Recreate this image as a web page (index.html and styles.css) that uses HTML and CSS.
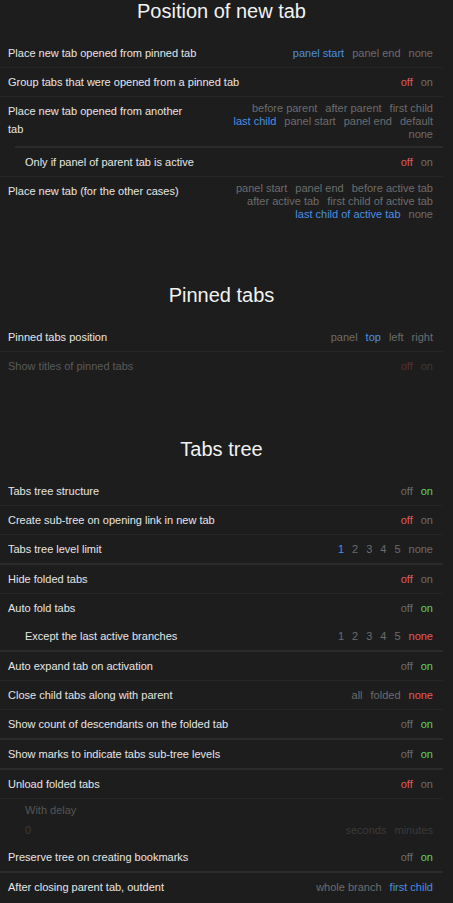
FILE: index.html
```html
<!DOCTYPE html>
<html lang="en">
<head>
<meta charset="utf-8">
<title>Settings</title>
<link rel="stylesheet" href="styles.css">
</head>
<body>
<main class="page">
  <section class="section">
    <h2 class="title">Position of new tab</h2>
    <div class="row">
      <div class="label">Place new tab opened from pinned tab</div>
      <div class="opts"><span class="blue">panel start</span><span>panel end</span><span>none</span></div>
    </div>
    <div class="sep"></div>
    <div class="row">
      <div class="label">Group tabs that were opened from a pinned tab</div>
      <div class="opts"><span class="red">off</span><span>on</span></div>
    </div>
    <div class="sep"></div>
    <div class="row">
      <div class="label">Place new tab opened from another tab</div>
      <div class="opts multi"><span>before parent</span><span>after parent</span><span>first child</span><span class="blue">last child</span><span>panel start</span><span>panel end</span><span>default</span><span>none</span></div>
    </div>
    <div class="sep thick inset"></div>
    <div class="row sub">
      <div class="label">Only if panel of parent tab is active</div>
      <div class="opts"><span class="red">off</span><span>on</span></div>
    </div>
    <div class="sep"></div>
    <div class="row">
      <div class="label">Place new tab (for the other cases)</div>
      <div class="opts multi"><span>panel start</span><span>panel end</span><span>before active tab</span><span>after active tab</span><span>first child of active tab</span><span class="blue">last child of active tab</span><span>none</span></div>
    </div>
  </section>

  <section class="section">
    <h2 class="title">Pinned tabs</h2>
    <div class="row">
      <div class="label">Pinned tabs position</div>
      <div class="opts"><span>panel</span><span class="blue">top</span><span>left</span><span>right</span></div>
    </div>
    <div class="sep"></div>
    <div class="row disabled">
      <div class="label">Show titles of pinned tabs</div>
      <div class="opts"><span class="red">off</span><span>on</span></div>
    </div>
  </section>

  <section class="section">
    <h2 class="title">Tabs tree</h2>
    <div class="row">
      <div class="label">Tabs tree structure</div>
      <div class="opts"><span>off</span><span class="green">on</span></div>
    </div>
    <div class="sep"></div>
    <div class="row">
      <div class="label">Create sub-tree on opening link in new tab</div>
      <div class="opts"><span class="red">off</span><span>on</span></div>
    </div>
    <div class="sep"></div>
    <div class="row">
      <div class="label">Tabs tree level limit</div>
      <div class="opts"><span class="blue">1</span><span>2</span><span>3</span><span>4</span><span>5</span><span>none</span></div>
    </div>
    <div class="sep thick"></div>
    <div class="row">
      <div class="label">Hide folded tabs</div>
      <div class="opts"><span class="red">off</span><span>on</span></div>
    </div>
    <div class="sep"></div>
    <div class="row">
      <div class="label">Auto fold tabs</div>
      <div class="opts"><span>off</span><span class="green">on</span></div>
    </div>
    <div class="row sub">
      <div class="label">Except the last active branches</div>
      <div class="opts"><span>1</span><span>2</span><span>3</span><span>4</span><span>5</span><span class="red">none</span></div>
    </div>
    <div class="sep thick"></div>
    <div class="row">
      <div class="label">Auto expand tab on activation</div>
      <div class="opts"><span>off</span><span class="green">on</span></div>
    </div>
    <div class="sep"></div>
    <div class="row">
      <div class="label">Close child tabs along with parent</div>
      <div class="opts"><span>all</span><span>folded</span><span class="red">none</span></div>
    </div>
    <div class="sep"></div>
    <div class="row">
      <div class="label">Show count of descendants on the folded tab</div>
      <div class="opts"><span>off</span><span class="green">on</span></div>
    </div>
    <div class="sep thick"></div>
    <div class="row">
      <div class="label">Show marks to indicate tabs sub-tree levels</div>
      <div class="opts"><span>off</span><span class="green">on</span></div>
    </div>
    <div class="sep thick"></div>
    <div class="row">
      <div class="label">Unload folded tabs</div>
      <div class="opts"><span class="red">off</span><span>on</span></div>
    </div>
    <div class="sep"></div>
    <div class="delay">
      <div class="delay-label">With delay</div>
      <div class="delay-input">
        <span class="num">0</span>
        <div class="opts"><span>seconds</span><span>minutes</span></div>
      </div>
    </div>
    <div class="row">
      <div class="label">Preserve tree on creating bookmarks</div>
      <div class="opts"><span>off</span><span class="green">on</span></div>
    </div>
    <div class="sep thick"></div>
    <div class="row">
      <div class="label">After closing parent tab, outdent</div>
      <div class="opts"><span>whole branch</span><span class="blue">first child</span></div>
    </div>
  </section>
</main>
</body>
</html>
```

FILE: styles.css
```css
* { box-sizing: border-box; }

html, body {
  margin: 0;
  padding: 0;
  background: #1d1d1d;
}

body {
  font-family: "Liberation Sans", Arial, sans-serif;
  font-size: 11px;
  color: #e6e6e6;
}

.page {
  width: 443px;
}

.section + .section {
  margin-top: 58px;
}

.title {
  margin: 0 0 17px;
  font-size: 20px;
  line-height: 22px;
  font-weight: normal;
  color: #f2f2f2;
  text-align: center;
}

.row {
  display: flex;
  align-items: flex-start;
  gap: 24px;
  padding: 5px 10px 5px 8px;
}

.row.sub {
  padding-left: 25px;
}

.label {
  flex: 1 1 auto;
  min-width: 0;
  line-height: 18px;
  color: #e6e6e6;
}

.opts {
  flex: 0 0 auto;
  max-width: 215px;
  display: flex;
  flex-wrap: wrap;
  justify-content: flex-end;
  column-gap: 8px;
  line-height: 13px;
  margin-top: 2.5px;
  color: #6c6c6c;
}

.opts.multi {
  margin-top: 0;
}

.blue { color: #4a8fe0; }
.red { color: #e05b5b; }
.green { color: #5ed35e; }

.sep {
  height: 1px;
  background: #262626;
}

.sep.thick {
  height: 2px;
  background: #2a2a2a;
}

.sep.inset {
  margin-left: 15px;
}

.disabled .label { color: #5a5a5a; }
.disabled .opts { color: #3a3a3a; }
.disabled .opts .red { color: #5a2e2e; }

.delay {
  padding: 3px 10px 5px 25px;
}

.delay-label {
  line-height: 16px;
  color: #555555;
}

.delay-input {
  display: flex;
  justify-content: space-between;
  align-items: center;
  margin-top: 4px;
  line-height: 16px;
}

.delay-input .num {
  color: #3c3c3c;
}

.delay-input .opts {
  margin-top: 0;
  color: #3a3a3a;
}
```
